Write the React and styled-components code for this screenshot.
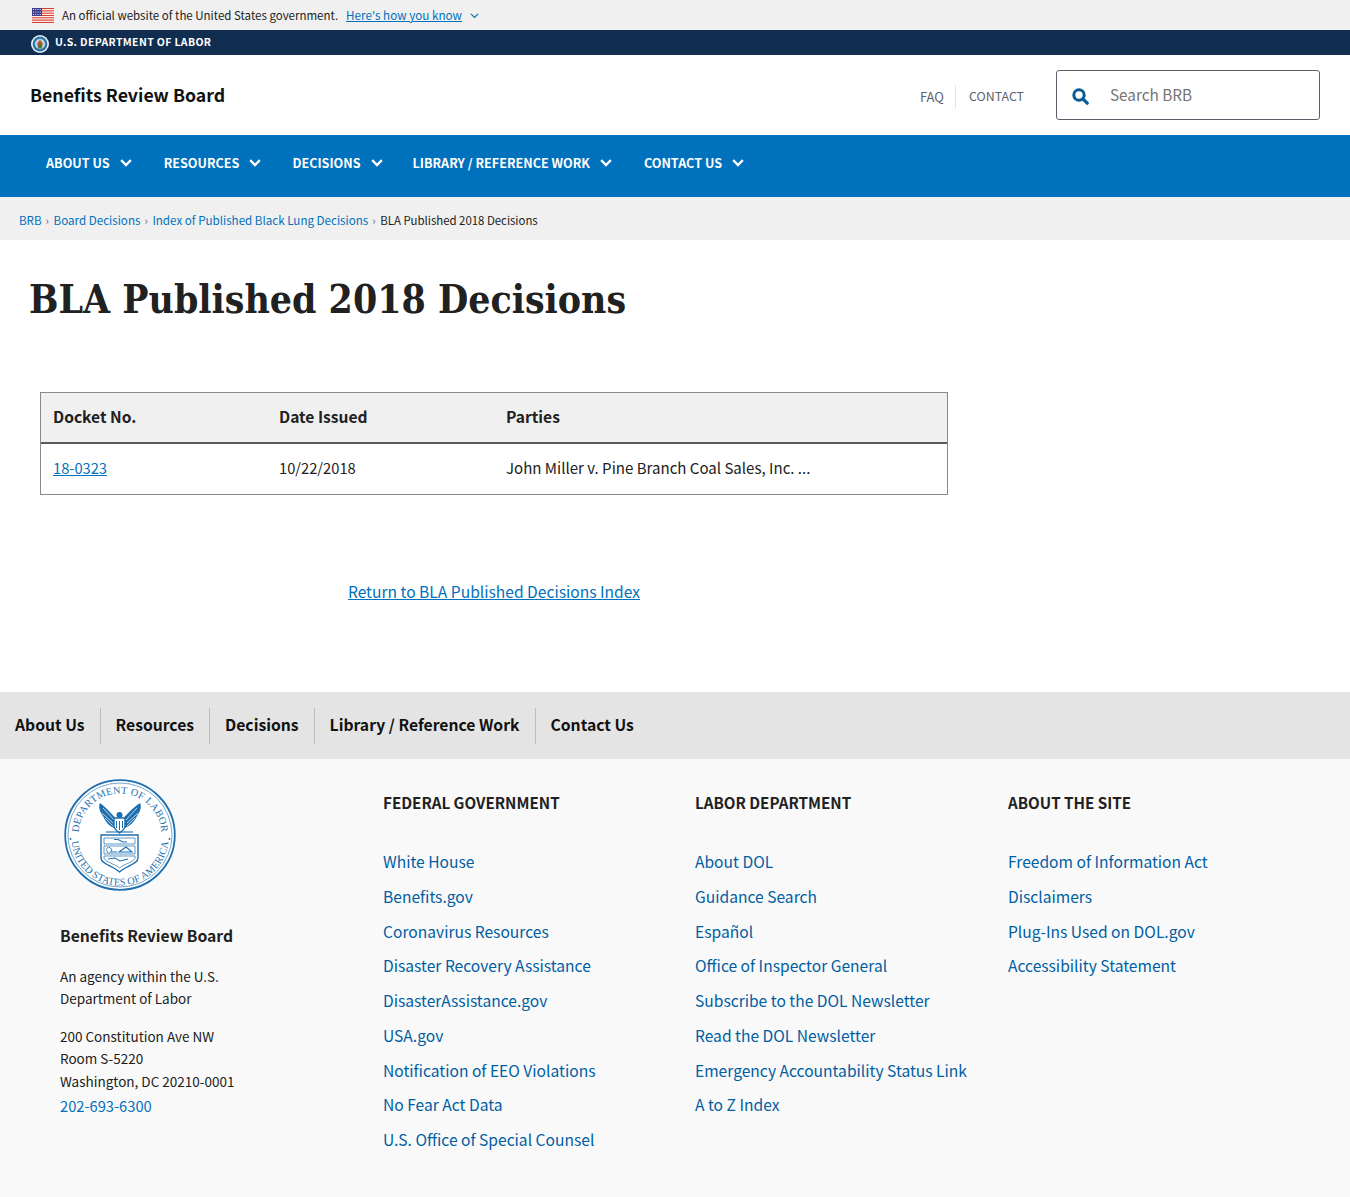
import styled, { createGlobalStyle } from 'styled-components'

const sans = `"Noto Sans CJK JP", "Source Sans Pro", "Open Sans", sans-serif`

const GlobalStyle = createGlobalStyle`
  html, body {
    margin: 0;
    padding: 0;
    background: #fff;
    color: #212121;
    font-family: ${sans};
  }
  * {
    box-sizing: border-box;
  }
`

const GovBanner = styled.div`
  display: flex;
  align-items: center;
  height: 30px;
  padding-left: 32px;
  background: #f0f0f0;
  font-size: 11.5px;
`

const GovText = styled.span`
  margin-left: 8px;
  padding-bottom: 1px;
  color: #212121;
`

const GovLink = styled.a`
  margin-left: 8px;
  padding-bottom: 1px;
  font-size: 11.7px;
  color: #0071bc;
  text-decoration: underline;
`

const GovCaret = styled.span`
  display: flex;
  margin: 2px 0 0 8px;
`

const DeptBar = styled.div`
  display: flex;
  align-items: center;
  height: 25px;
  padding-left: 31px;
  background: #112e51;
  color: #fff;
  font-size: 10.5px;
  font-weight: 700;
  letter-spacing: .35px;
`

const DeptName = styled.span`
  margin-left: 6px;
  padding-bottom: 3px;
`

const SealMark = styled.svg`
  margin-top: 2px;
`

const Header = styled.header`
  display: flex;
  justify-content: space-between;
  align-items: center;
  height: 80px;
  padding: 0 30px;
`

const SiteName = styled.div`
  padding-bottom: 2px;
  font-size: 17.7px;
  font-weight: 700;
  color: #111;
`

const Tools = styled.div`
  display: flex;
  align-items: center;
`

const ToolLink = styled.a`
  display: flex;
  align-items: center;
  height: 24px;
  margin-top: 3px;
  padding: 0 ${p => (p.$divider ? 0 : 11)}px 1px ${p => (p.$divider ? 13 : 0)}px;
  font-size: ${p => (p.$divider ? 12.4 : 13)}px;
  color: #5b616b;
  border-left: ${p => (p.$divider ? '1px solid #e4e4e4' : '0')};
`

const SearchBox = styled.div`
  display: flex;
  align-items: center;
  width: 264px;
  height: 50px;
  margin-left: 32px;
  padding-left: 15px;
  border: 1px solid #5b616b;
  border-radius: 3px;
  font-size: 15.3px;
  color: #757575;
`

const SearchGlyph = styled.svg`
  margin-top: 2px;
`

const SearchLabel = styled.span`
  margin-left: 21px;
  margin-top: -2px;
`

const MainNav = styled.nav`
  display: flex;
  height: 62px;
  padding: 17px 0 0 46px;
  background: #0071bc;
`

const NavItem = styled.a`
  display: flex;
  align-items: center;
  height: 22px;
  margin-right: ${p => p.$gap}px;
  padding-bottom: 1px;
  color: #fff;
  font-size: 12.6px;
  font-weight: 700;
  gap: 10px;
`

const Crumbs = styled.div`
  display: flex;
  align-items: center;
  height: 43px;
  padding: 2px 0 0 19px;
  background: #f0f0f0;
  font-size: 11.4px;
  color: #212121;
`

const CrumbLink = styled.a`
  font-size: 11.6px;
  color: #0071bc;
`

const CrumbSep = styled.span`
  margin: 0 4px;
  width: 4px;
  color: #5b616b;
  font-size: 11px;
`

const Title = styled.h1`
  margin: 0;
  padding: 33px 0 0 29px;
  height: 152px;
  font-family: "DejaVu Serif Condensed", "DejaVu Serif", serif;
  font-size: 38.8px;
  line-height: 54px;
  font-weight: 700;
  color: #212121;
`

const TableWrap = styled.div`
  width: 908px;
  margin-left: 40px;
  border: 1px solid #8a8a8a;
`

const HeadRow = styled.div`
  display: grid;
  grid-template-columns: 226px 227px 1fr;
  height: 51px;
  align-items: center;
  padding: 0 0 3px 12px;
  background: #f0f0f0;
  border-bottom: 2px solid #5b5b5b;
  font-size: 15.6px;
  font-weight: 700;
`

const BodyRow = styled.div`
  display: grid;
  grid-template-columns: 226px 227px 1fr;
  height: 50px;
  align-items: baseline;
  padding: 13px 0 0 12px;
  line-height: 22px;
  font-size: 15.05px;
`

const Digits = styled.span`
  font-size: 14.7px;
`

const TextLink = styled.a`
  color: #0071bc;
  text-decoration: underline;
`

const ReturnRow = styled.div`
  width: 908px;
  margin: 85px 0 0 40px;
  height: 112px;
  text-align: center;
  font-size: 15.6px;
`

const FooterNav = styled.nav`
  display: flex;
  align-items: center;
  height: 67px;
  background: #e4e4e4;
`

const FooterNavItem = styled.a`
  display: flex;
  align-items: center;
  height: 36px;
  padding: 0 15px 3px;
  font-size: 15.7px;
  font-weight: 700;
  color: #111;
  border-left: ${p => (p.$divider ? '1px solid #bdbdbd' : '0')};
`

const Footer = styled.footer`
  display: grid;
  grid-template-columns: 323px 312px 313px 1fr;
  height: 438px;
  padding-left: 60px;
  background: #f9f9f9;
`

const AgencyCol = styled.div`
  padding-top: 20px;
  font-size: 13.5px;
  line-height: 22.5px;
  color: #212121;
`

const SealBox = styled.div`
  height: 112px;
  margin-left: 4px;
`

const AgencyName = styled.div`
  margin-top: 34px;
  font-size: 15.7px;
  font-weight: 700;
`

const AgencyText = styled.p`
  margin: ${p => p.$top}px 0 0;
`

const Phone = styled.a`
  display: block;
  margin-top: 3px;
  font-size: 14.7px;
  color: #0071bc;
`

const LinkCol = styled.div`
  padding-top: 31px;
`

const ColTitle = styled.h3`
  margin: 0 0 35px;
  font-size: 15.2px;
  line-height: 24px;
  font-weight: 700;
  color: #212121;
`

const ColLink = styled.a`
  display: block;
  height: 34.75px;
  font-size: 15.6px;
  line-height: 24px;
  color: #005ea2;
`

const Flag = () => (
  <svg width="22" height="15" viewBox="0 0 22 15">
    <rect width="22" height="15" fill="#fff" />
    {[0, 2, 4, 6, 8, 10, 12].map(i => (
      <rect key={i} y={i * 1.154} width="22" height="1.154" fill="#d8402f" />
    ))}
    <rect width="10" height="8" fill="#3c3b8e" />
    {[1.5, 4, 6.5].flatMap(y =>
      [1.5, 3.75, 6, 8.25].map(x => (
        <circle key={`${x}-${y}`} cx={x} cy={y} r=".55" fill="#fff" />
      ))
    )}
  </svg>
)

const SmallSeal = () => (
  <SealMark width="18" height="18" viewBox="0 0 18 18">
    <circle cx="9" cy="9" r="9" fill="#e8eef3" />
    <circle cx="9" cy="9" r="7.4" fill="#2f79ad" />
    <circle cx="9" cy="9" r="5" fill="#c9dbe6" />
    <path d="M9 4.500 12 8.500 10.800 13.500H7.200L6 8.500Z" fill="#b5622b" />
    <path d="M7.500 9h3v4h-3z" fill="#3c7a4a" />
  </SealMark>
)

const Caret = ({ size = 8, color = '#fff', width = 2.4 }) => (
  <svg width={size * 1.5} height={size} viewBox="0 0 12 8" fill="none">
    <path d="M1.200 1.200 6 6l4.800-4.800" stroke={color} strokeWidth={width} />
  </svg>
)

const SearchIcon = () => (
  <SearchGlyph width="17" height="17" viewBox="0 0 17 17" fill="none">
    <circle cx="7" cy="7" r="5.200" stroke="#0b5c96" strokeWidth="3" />
    <path d="M10.800 10.800 15.200 15.200" stroke="#0b5c96" strokeWidth="3.200" strokeLinecap="round" />
  </SearchGlyph>
)

const sealBlue = '#1f6fae'

const Seal = () => (
  <svg width="112" height="112" viewBox="0 0 112 112">
    <defs>
      <path id="sealTop" d="M14.500 56A41.500 41.500 0 0 1 97.500 56" />
      <path id="sealBottom" d="M7.500 58A48.500 48.500 0 0 0 104.500 58" />
    </defs>
    <circle cx="56" cy="56" r="54.800" fill="#fff" stroke={sealBlue} strokeWidth="1.800" />
    <circle cx="56" cy="56" r="52" fill="none" stroke={sealBlue} strokeWidth=".6" />
    <text fontFamily="Liberation Serif, serif" fontSize="10.200" fill={sealBlue} letterSpacing=".3">
      <textPath href="#sealTop" startOffset="50%" textAnchor="middle">DEPARTMENT OF LABOR</textPath>
    </text>
    <text fontFamily="Liberation Serif, serif" fontSize="10.200" fill={sealBlue} letterSpacing=".1">
      <textPath href="#sealBottom" startOffset="50%" textAnchor="middle">UNITED STATES OF AMERICA</textPath>
    </text>
    <circle cx="6.500" cy="60" r=".9" fill={sealBlue} />
    <circle cx="105.500" cy="60" r=".9" fill={sealBlue} />
    {/* eagle */}
    <path d="M53 40C49 37 45 31 36 24 34 28 36 33 39 37 41 42 45 47 50 49Z" fill={sealBlue} />
    <path d="M58 40C62 37 66 31 76 24 78 28 76 33 73 37 71 42 66 47 61 49Z" fill={sealBlue} />
    <path d="M39 29 50 41M38 34 49 44M41 39 49 47M73 29 62 41M74 34 63 44M71 39 63 47" stroke="#fff" strokeWidth=".7" />
    <circle cx="55.500" cy="36" r="3" fill={sealBlue} />
    <path d="M50 39H61V47C61 50 58 52 55.500 54 53 52 50 50 50 47Z" fill="#fff" stroke={sealBlue} strokeWidth="1.400" />
    <path d="M52.500 42V49M55.500 42V51M58.500 42V49" stroke={sealBlue} strokeWidth="1" />
    <path d="M42 53H69" stroke={sealBlue} strokeWidth="1.100" />
    {/* shield */}
    <path d="M37 56H74V79C74 85 62 87 55.500 93 49 87 37 85 37 79Z" fill="#fff" stroke={sealBlue} strokeWidth="1.400" />
    <path d="M40 59H71V65H40ZM40 67H71V75H40ZM40 77H71V79C70 83 60 85 55.500 89 51 85 41 83 40 79Z" fill="none" stroke={sealBlue} strokeWidth=".7" />
    <path d="M50 60.500H54L59 63H63M47 73H53M55 73 62 68 68 73ZM44 80 51 79 56 82 64 80" stroke={sealBlue} strokeWidth="1.100" fill="none" />
    <circle cx="45" cy="71" r="2.600" fill="none" stroke={sealBlue} strokeWidth="1.200" strokeDasharray="1 .7" />
  </svg>
)

const navItems = [
  ['ABOUT US', 32],
  ['RESOURCES', 31],
  ['DECISIONS', 30],
  ['LIBRARY / REFERENCE WORK', 32],
  ['CONTACT US', 0],
]

const federal = [
  'White House',
  'Benefits.gov',
  'Coronavirus Resources',
  'Disaster Recovery Assistance',
  'DisasterAssistance.gov',
  'USA.gov',
  'Notification of EEO Violations',
  'No Fear Act Data',
  'U.S. Office of Special Counsel',
]

const labor = [
  'About DOL',
  'Guidance Search',
  'Español',
  'Office of Inspector General',
  'Subscribe to the DOL Newsletter',
  'Read the DOL Newsletter',
  'Emergency Accountability Status Link',
  'A to Z Index',
]

const site = [
  'Freedom of Information Act',
  'Disclaimers',
  'Plug-Ins Used on DOL.gov',
  'Accessibility Statement',
]

const columns = [
  ['FEDERAL GOVERNMENT', federal],
  ['LABOR DEPARTMENT', labor],
  ['ABOUT THE SITE', site],
]

const footerNav = ['About Us', 'Resources', 'Decisions', 'Library / Reference Work', 'Contact Us']

const App = () => {
  return (
    <>
      <GlobalStyle />
      <GovBanner>
        <Flag />
        <GovText>An official website of the United States government.</GovText>
        <GovLink>Here's how you know</GovLink>
        <GovCaret>
          <Caret size={6} color="#0071bc" width={1.6} />
        </GovCaret>
      </GovBanner>
      <DeptBar>
        <SmallSeal />
        <DeptName>U.S. DEPARTMENT OF LABOR</DeptName>
      </DeptBar>
      <Header>
        <SiteName>Benefits Review Board</SiteName>
        <Tools>
          <ToolLink>FAQ</ToolLink>
          <ToolLink $divider>CONTACT</ToolLink>
          <SearchBox>
            <SearchIcon />
            <SearchLabel>Search BRB</SearchLabel>
          </SearchBox>
        </Tools>
      </Header>
      <MainNav>
        {navItems.map(([label, gap]) => (
          <NavItem key={label} $gap={gap}>
            {label}
            <Caret />
          </NavItem>
        ))}
      </MainNav>
      <Crumbs>
        <CrumbLink>BRB</CrumbLink>
        <CrumbSep>›</CrumbSep>
        <CrumbLink>Board Decisions</CrumbLink>
        <CrumbSep>›</CrumbSep>
        <CrumbLink>Index of Published Black Lung Decisions</CrumbLink>
        <CrumbSep>›</CrumbSep>
        BLA Published 2018 Decisions
      </Crumbs>
      <Title>BLA Published 2018 Decisions</Title>
      <TableWrap>
        <HeadRow>
          <span>Docket No.</span>
          <span>Date Issued</span>
          <span>Parties</span>
        </HeadRow>
        <BodyRow>
          <Digits><TextLink>18-0323</TextLink></Digits>
          <Digits>10/22/2018</Digits>
          <span>John Miller v. Pine Branch Coal Sales, Inc. ...</span>
        </BodyRow>
      </TableWrap>
      <ReturnRow>
        <TextLink>Return to BLA Published Decisions Index</TextLink>
      </ReturnRow>
      <FooterNav>
        {footerNav.map((label, i) => (
          <FooterNavItem key={label} $divider={i > 0}>{label}</FooterNavItem>
        ))}
      </FooterNav>
      <Footer>
        <AgencyCol>
          <SealBox>
            <Seal />
          </SealBox>
          <AgencyName>Benefits Review Board</AgencyName>
          <AgencyText $top={17}>An agency within the U.S.<br />Department of Labor</AgencyText>
          <AgencyText $top={15}>200 Constitution Ave NW<br />Room S-5220<br />Washington, DC 20210-0001</AgencyText>
          <Phone>202-693-6300</Phone>
        </AgencyCol>
        {columns.map(([title, links]) => (
          <LinkCol key={title}>
            <ColTitle>{title}</ColTitle>
            {links.map(label => (
              <ColLink key={label}>{label}</ColLink>
            ))}
          </LinkCol>
        ))}
      </Footer>
    </>
  )
}

export default App
